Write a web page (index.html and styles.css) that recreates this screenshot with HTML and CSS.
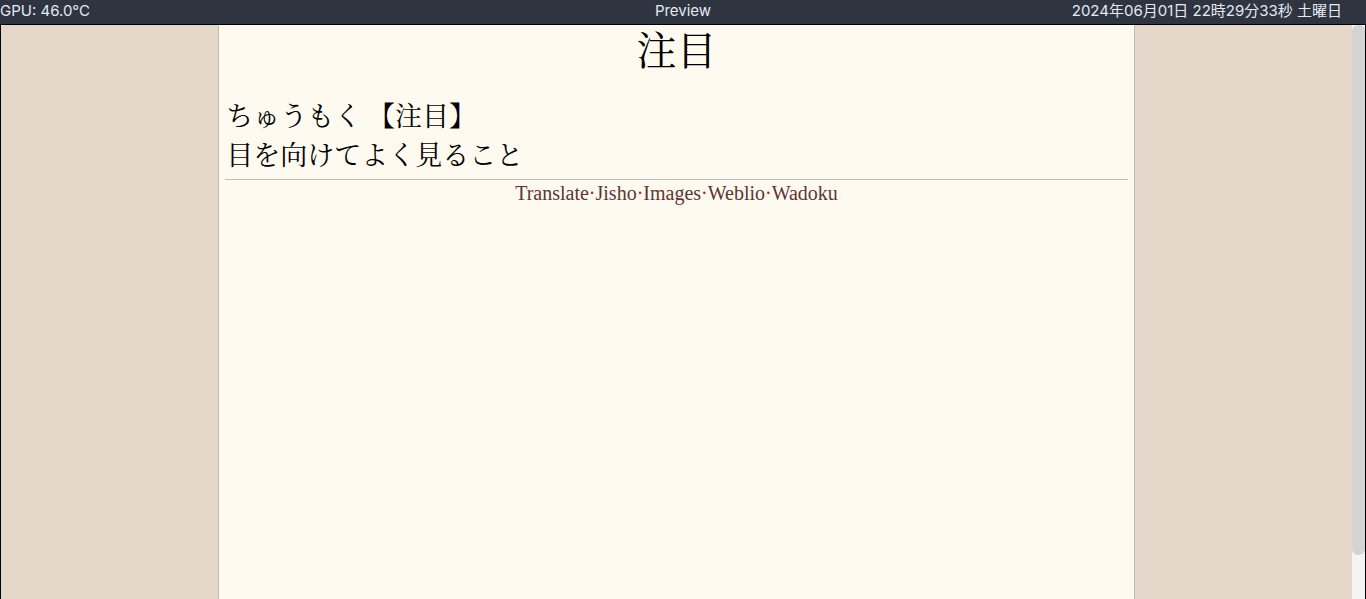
FILE: index.html
```html
<!DOCTYPE html>
<html lang="ja">
<head>
<meta charset="utf-8">
<title>Preview</title>
<link rel="stylesheet" href="styles.css">
</head>
<body>
<header class="bar">
  <span class="bar-start">GPU: 46.0°C</span>
  <span class="bar-title">Preview</span>
  <time class="bar-clock">2024年06月01日 22時29分33秒 土曜日</time>
</header>
<div class="window">
  <main class="card">
    <h1 class="word">注目</h1>
    <section class="definition">
      <p>ちゅうもく 【注目】</p>
      <p>目を向けてよく見ること</p>
    </section>
    <nav class="links"><a href="#translate">Translate</a>·<a href="#jisho">Jisho</a>·<a href="#images">Images</a>·<a href="#weblio">Weblio</a>·<a href="#wadoku">Wadoku</a></nav>
  </main>
  <div class="scrollbar"><div class="thumb"></div></div>
</div>
</body>
</html>
```

FILE: styles.css
```css
* {
  box-sizing: border-box;
}

body {
  margin: 0;
  height: 100vh;
  display: flex;
  flex-direction: column;
  overflow: hidden;
  background: #e5d7c9;
}

.bar {
  display: grid;
  grid-template-columns: 1fr auto 1fr;
  height: 24px;
  padding-right: 24px;
  background: #2e3440;
  color: #e5e9f0;
  font: 15px/22px Inter, "Noto Sans CJK JP", sans-serif;
}

.bar-title {
  padding-left: 24px;
}

.bar-clock {
  text-align: right;
}

.window {
  flex: 1;
  display: flex;
  border: 1px solid #000;
  border-bottom: 0;
}

.card {
  width: 67.2%;
  margin: 0 auto;
  padding: 0 6px;
  border: solid #c4bab8;
  border-width: 0 1px;
  background: #fffaf0;
  color: #000;
  font-family: "Liberation Serif", "Noto Serif CJK JP", "Noto Sans CJK JP", serif;
}

.word {
  margin: 0;
  font-size: 40px;
  font-weight: 400;
  line-height: 54px;
  text-align: center;
}

.definition {
  margin-top: 19px;
  padding: 0 0 3px 1px;
  border-bottom: 1px solid #c4bab8;
  font-size: 27px;
  font-weight: 400;
  line-height: 39px;
}

.definition p {
  margin: 0;
}

.links {
  color: #b22222;
  font-size: 20px;
  line-height: 26px;
  text-align: center;
}

.links a {
  color: #5c3535;
  text-decoration: none;
}

.scrollbar {
  width: 13px;
  background: #f4f4f4;
}

.thumb {
  height: 92.3%;
  border-radius: 6px;
  background: #d4d4d4;
}
```
